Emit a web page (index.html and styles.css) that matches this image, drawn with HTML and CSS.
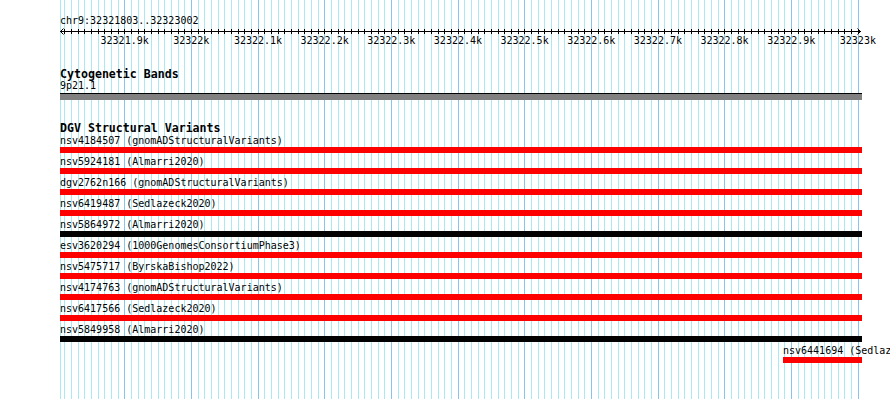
FILE: index.html
```html
<!DOCTYPE html>
<html lang="en">
<head>
<meta charset="utf-8">
<title>chr9:32321803..32323002</title>
<link rel="stylesheet" href="styles.css">
</head>
<body>
<div class="page">
  <div class="coord">chr9:32321803..32323002</div>
  <svg class="ruler" width="802" height="9" viewBox="0 0 802 9" shape-rendering="crispEdges">
    <defs>
      <pattern id="ticks" x="4" y="0" width="20" height="9" patternUnits="userSpaceOnUse">
        <rect x="0" y="2" width="1" height="5" fill="#000"/>
        <rect x="7" y="2" width="1" height="5" fill="#000"/>
        <rect x="14" y="2" width="1" height="5" fill="#000"/>
      </pattern>
    </defs>
    <rect x="0" y="0" width="800" height="9" fill="url(#ticks)"/>
    <rect x="0" y="4" width="801" height="1" fill="#000"/>
    <path d="M3.5 1.5 L0.5 4.5 L3.5 7.5 M797.5 1.5 L800.5 4.5 L797.5 7.5" fill="none" stroke="#000" stroke-width="1" shape-rendering="auto"/>
  </svg>
  <div class="scale">
    <span>32321.9k</span><span>32322k</span><span>32322.1k</span><span>32322.2k</span><span>32322.3k</span><span>32322.4k</span><span>32322.5k</span><span>32322.6k</span><span>32322.7k</span><span>32322.8k</span><span>32322.9k</span><span>32323k</span>
  </div>

  <div class="track-title cyto-title">Cytogenetic Bands</div>
  <div class="label band-label">9p21.1</div>
  <div class="band"></div>

  <div class="track-title dgv-title">DGV Structural Variants</div>
  <div class="features">
    <div class="feature"><div class="label">nsv4184507 (gnomADStructuralVariants)</div><div class="bar red"></div></div>
    <div class="feature"><div class="label">nsv5924181 (Almarri2020)</div><div class="bar red"></div></div>
    <div class="feature"><div class="label">dgv2762n166 (gnomADStructuralVariants)</div><div class="bar red"></div></div>
    <div class="feature"><div class="label">nsv6419487 (Sedlazeck2020)</div><div class="bar red"></div></div>
    <div class="feature"><div class="label">nsv5864972 (Almarri2020)</div><div class="bar black"></div></div>
    <div class="feature"><div class="label">esv3620294 (1000GenomesConsortiumPhase3)</div><div class="bar red"></div></div>
    <div class="feature"><div class="label">nsv5475717 (ByrskaBishop2022)</div><div class="bar red"></div></div>
    <div class="feature"><div class="label">nsv4174763 (gnomADStructuralVariants)</div><div class="bar red"></div></div>
    <div class="feature"><div class="label">nsv6417566 (Sedlazeck2020)</div><div class="bar red"></div></div>
    <div class="feature"><div class="label">nsv5849958 (Almarri2020)</div><div class="bar black"></div></div>
    <div class="feature short"><div class="label">nsv6441694 (Sedlazeck2020)</div><div class="bar red"></div></div>
  </div>
</div>
</body>
</html>
```

FILE: styles.css
```css
html, body {
  margin: 0;
  padding: 0;
  overflow: hidden;
  background: #ffffff;
}

body {
  font-family: "DejaVu Sans Mono", "Liberation Mono", monospace;
  font-size: 10px;
  line-height: 10px;
  color: #000000;
}

.page {
  box-sizing: content-box;
  width: 802px;
  height: 399px;
  padding-left: 60px;
  background-image:
    linear-gradient(to right, #86c6ec 0 1px, transparent 1px 67px, #86c6ec 67px 68px, transparent 68px 134px, #86c6ec 134px 135px, transparent 135px),
    linear-gradient(to right, #aae9f1 0 1px, transparent 1px 7px, #aae9f1 7px 8px, transparent 8px 14px, #aae9f1 14px 15px, transparent 15px),
    linear-gradient(#aae9f1, #aae9f1);
  background-size: 200px 100%, 20px 100%, 1px 100%;
  background-position: 64px 0, 4px 0, 0 0;
  background-repeat: repeat-x, repeat-x, no-repeat;
  background-origin: content-box;
  background-clip: content-box;
}

.coord {
  padding-top: 16px;
  white-space: nowrap;
}

.ruler {
  display: block;
  margin-top: 1px;
  overflow: visible;
}

.scale {
  display: flex;
  margin-left: 31.333px;
  white-space: nowrap;
}

.scale span {
  flex: 0 0 66.667px;
  text-align: center;
}

.track-title {
  font-weight: bold;
  font-size: 11.6px;
  line-height: 12px;
  white-space: nowrap;
}

.cyto-title {
  margin-top: 22px;
}

.band-label {
  margin-top: 1px;
}

.band {
  margin-top: 2px;
  height: 6px;
  border-top: 1px solid #000000;
  background: #808080;
}

.dgv-title {
  margin-top: 22px;
}

.features {
  margin-top: 2px;
}

.feature {
  margin-bottom: 4px;
}

.label {
  white-space: nowrap;
}

.bar {
  margin-top: 1px;
  height: 6px;
}

.bar.red {
  background: #ff0000;
}

.bar.black {
  background: #000000;
}

.feature.short {
  margin-left: 723px;
  width: 79px;
}
```
